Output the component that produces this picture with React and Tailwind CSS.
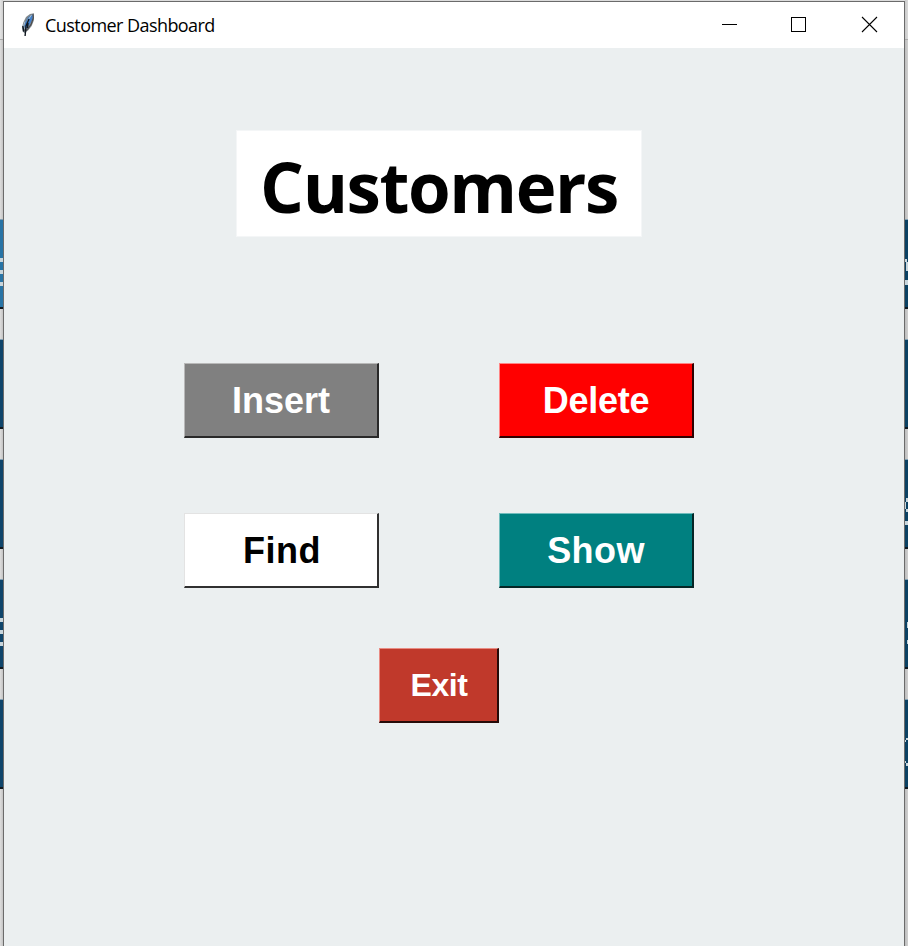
const left = [
  { color: 'bg-[#2874a6]', marks: [[39, 4, 0, 4], [51, 4, 0, 4], [63, 4, 0, 4]] },
  { color: 'bg-[#0f456b]', marks: [] },
  { color: 'bg-[#0f456b]', marks: [] },
  { color: 'bg-[#0f456b]', marks: [[39, 4, 0, 4], [51, 4, 0, 4], [63, 4, 0, 4]] },
  { color: 'bg-[#0f456b]', marks: [] },
];

const right = [
  { color: 'bg-[#0b4163]', marks: [[40, 3, 0, 2], [43, 9, 1, 2], [61, 5, 0, 3]] },
  { color: 'bg-[#0b4163]', marks: [] },
  { color: 'bg-[#0b4163]', marks: [[39, 4, 1, 2], [43, 7, 0, 1], [50, 3, 1, 2], [62, 4, 0, 3]] },
  { color: 'bg-[#0b4163]', marks: [[43, 6, 2, 1], [61, 4, 2, 1]] },
  { color: 'bg-[#0b4163]', marks: [[39, 2, 1, 2], [41, 2, 0, 1], [62, 2, 0, 1], [64, 3, 1, 2]] },
];

function Strip({ items, side }) {
  const tone = side === 'left' ? 'w-[3px] from-[#dedede] to-[#c4c4c4]' : 'w-[3px] from-[#bdbdbd] to-[#d0d0d0]';
  return (
    <div className={`${tone} h-full shrink-0 bg-linear-to-r`}>
      <div className="h-[39px] bg-white/20" />
      <div className="h-px bg-[#aaa]" />
      <div className="flex flex-col gap-[30px] pt-[179px]">
        {items.map((item, i) => (
          <div key={i} className={`${item.color} relative h-[90px] overflow-hidden border-t border-b-2 border-t-[#7fa0b4] border-b-[#101820]`}>
            {item.marks.map(([top, height, x, width], j) => (
              <div key={j} className="absolute bg-[#c8d5dc]" style={{ top: top - 1, height, left: x, width }} />
            ))}
          </div>
        ))}
      </div>
    </div>
  );
}

function Feather() {
  return (
    <svg className="h-6 w-4 shrink-0" viewBox="0 0 16 24">
      <path d="M14 .3 10 1 6 4 3.5 9 2 14l.6 4.5L4.5 20 8 17.5l3.7-4.5L14 7z" fill="#7d868d" />
      <path d="M12.8 1.5 8.5 4 5.5 9 4.3 14l2.2 1.5 4-5.5 2.2-5z" fill="#3f7fcb" />
      <path d="M11.5 2 8 7l-1 5M5 8.5 3.5 13l.7 3" fill="none" stroke="#a9bfd2" strokeWidth="1" />
      <path d="M13 1.2 13.3 5l-2 6-3.5 5-2.3 2" fill="none" stroke="#4d4a48" strokeWidth="1.1" />
      <path d="m9 6-3 7-.9 10M8 10l-.5 5M2.8 13l1 5.5" fill="none" stroke="#111820" strokeWidth="1.4" />
    </svg>
  );
}

function RaisedButton({ label, className }) {
  return (
    <button className={`${className} flex h-[75px] items-center justify-center border-t border-r-2 border-b-2 border-l font-['Liberation_Sans',Arial,sans-serif] leading-none font-bold`}>
      {label}
    </button>
  );
}

export default function App() {
  return (
    <div className="flex h-[946px] w-[908px] overflow-hidden bg-[#dcdcdc]">
      <Strip items={left} side="left" />
      <main className="mt-px flex h-[945px] w-[902px] flex-col border-x border-t border-[#6b6b6b] bg-[#ebeff0]">
        <header className="flex h-[46px] shrink-0 items-center bg-white">
          <div className="flex h-full grow items-center pl-4">
            <Feather />
            <span className="pl-[9px] font-['Open_Sans','Noto_Sans',sans-serif] text-lg leading-6 tracking-[-0.56px] whitespace-nowrap text-black">Customer Dashboard</span>
          </div>
          <svg className="h-[46px] w-[210px] shrink-0" viewBox="0 0 210 46" fill="none" stroke="#000" shapeRendering="crispEdges">
            <path d="M28 22.5h15M97.5 15.5h14v14h-14z" />
            <path d="m168 15 15 15M183 15l-15 15" shapeRendering="auto" strokeWidth="1.1" />
          </svg>
        </header>
        <section className="flex flex-col items-start">
          <h1 className="mt-[82px] ml-[232px] flex h-[107px] w-[406px] items-center justify-center border border-[#f4f6f7] bg-white pt-1.5 font-['Open_Sans','Noto_Sans',sans-serif] text-[69px] leading-none font-bold tracking-[-1.4px] text-black">
            Customers
          </h1>
          <div className="mt-[126px] ml-[180px] grid grid-cols-[195px_195px] gap-x-[120px] gap-y-[75px]">
            <RaisedButton label="Insert" className="border-t-[#b8b8b8] border-r-[#292929] border-b-[#292929] border-l-[#b8b8b8] bg-[#808080] pt-0.5 text-4xl text-white" />
            <RaisedButton label="Delete" className="border-t-[#ff8585] border-r-[#300000] border-b-[#300000] border-l-[#ff8585] bg-[#ff0000] pt-0.5 text-4xl tracking-[-0.3px] text-white" />
            <RaisedButton label="Find" className="border-t-[#e3e3e3] border-r-[#303030] border-b-[#303030] border-l-[#e3e3e3] bg-white pt-0.5 pl-0.5 text-4xl tracking-[0.5px] text-black" />
            <RaisedButton label="Show" className="border-t-[#70bcbc] border-r-[#052626] border-b-[#052626] border-l-[#70bcbc] bg-[#008080] pt-0.5 text-4xl tracking-[0.4px] text-white" />
          </div>
          <div className="mt-[60px] ml-[375px]">
            <RaisedButton label="Exit" className="w-[120px] border-t-[#e98b83] border-r-[#260b08] border-b-[#260b08] border-l-[#e98b83] bg-[#c0392b] pl-px text-[32px] tracking-[-0.4px] text-white" />
          </div>
        </section>
      </main>
      <Strip items={right} side="right" />
    </div>
  );
}
